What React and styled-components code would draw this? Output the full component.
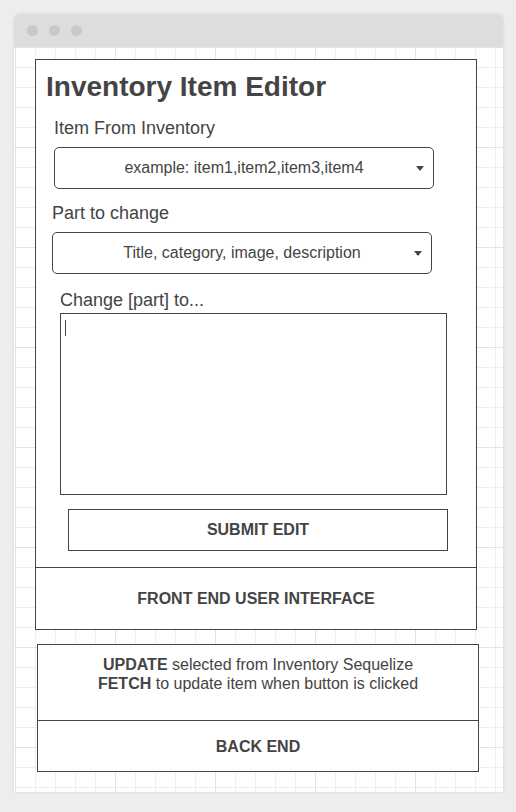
import React from "react";
import styled, { createGlobalStyle } from "styled-components";

const GlobalStyle = createGlobalStyle`
  html, body {
    margin: 0;
    padding: 0;
    background: #ededed;
  }
  body {
    font-family: "Liberation Sans", Arial, sans-serif;
    color: #444;
  }
  * { box-sizing: border-box; }
`;

const Page = styled.div`
  padding: 14px 13px 20px 14px;
`;

const Window = styled.div`
  width: 489px;
  display: flex;
  flex-direction: column;
  border-radius: 6px 6px 0 0;
  box-shadow: 0 0 3px rgba(0, 0, 0, 0.12);
`;

const TitleBar = styled.div`
  height: 33px;
  background: #dddddd;
  border-radius: 6px 6px 0 0;
  display: flex;
  align-items: center;
  gap: 11px;
  padding-left: 13px;
`;

const Dot = styled.span`
  width: 11px;
  height: 11px;
  border-radius: 50%;
  background: #c9c9c9;
`;

const Canvas = styled.div`
  background-color: #fff;
  background-image:
    linear-gradient(to right, #e3e3e3 1px, transparent 1px),
    linear-gradient(to bottom, #e3e3e3 1px, transparent 1px),
    linear-gradient(to right, #eeeeee 1px, transparent 1px),
    linear-gradient(to bottom, #eeeeee 1px, transparent 1px);
  background-size: 100px 100px, 100px 100px, 20px 20px, 20px 20px;
  background-position: 1px 0, 1px 0, 1px 0, 1px 0;
  padding: 12px 0 20px 0;
  display: flex;
  flex-direction: column;
`;

const Frame = styled.div`
  width: 442px;
  margin-left: ${(p) => p.$left}px;
  margin-top: ${(p) => p.$top || 0}px;
  border: 1px solid #444;
  background: #fff;
  display: flex;
  flex-direction: column;
`;

const EditorSection = styled.div`
  padding: 11px 0 16px 0;
  display: flex;
  flex-direction: column;
  align-items: flex-start;
`;

const Title = styled.h1`
  margin: 0 0 0 10px;
  font-size: 28px;
  line-height: 32px;
  font-weight: 700;
  color: #444;
`;

const Label = styled.div`
  margin-top: ${(p) => p.$top}px;
  margin-left: ${(p) => p.$left}px;
  font-size: 18px;
  line-height: 22px;
  color: #444;
`;

const Select = styled.div`
  margin-top: ${(p) => p.$top}px;
  margin-left: ${(p) => p.$left}px;
  width: 380px;
  height: 42px;
  border: 1px solid #444;
  border-radius: 5px;
  display: grid;
  grid-template-columns: 24px 1fr 24px;
  align-items: center;
  font-size: 16px;
  color: #444;
`;

const SelectText = styled.span`
  grid-column: 2;
  text-align: center;
  white-space: nowrap;
`;

const Arrow = styled.span`
  grid-column: 3;
  justify-self: end;
  margin-right: ${(p) => p.$right}px;
  width: 0;
  height: 0;
  border-left: 4px solid transparent;
  border-right: 4px solid transparent;
  border-top: 5px solid #444;
`;

const TextBox = styled.div`
  margin-top: 2px;
  margin-left: 24px;
  width: 387px;
  height: 182px;
  border: 1px solid #444;
  padding: 6px 0 0 4px;
`;

const Caret = styled.div`
  width: 1px;
  height: 16px;
  background: #444;
`;

const SubmitButton = styled.div`
  margin-top: 14px;
  margin-left: 32px;
  width: 380px;
  height: 42px;
  border: 1px solid #444;
  display: flex;
  align-items: center;
  justify-content: center;
  font-size: 16px;
  font-weight: 700;
  color: #444;
`;

const Band = styled.div`
  height: ${(p) => p.$h}px;
  border-top: ${(p) => (p.$divider ? "1px solid #444" : "none")};
  display: flex;
  flex-direction: column;
  align-items: center;
  justify-content: ${(p) => (p.$center ? "center" : "flex-start")};
  padding-top: ${(p) => p.$pad || 0}px;
  font-size: 16px;
  line-height: 19px;
  color: #444;
  text-align: center;
`;

const Strong = styled.b`
  font-weight: 700;
`;

export default function App() {
  return (
    <>
      <GlobalStyle />
      <Page>
        <Window>
          <TitleBar>
            <Dot />
            <Dot />
            <Dot />
          </TitleBar>
          <Canvas>
            <Frame $left={21}>
              <EditorSection>
                <Title>Inventory Item Editor</Title>
                <Label $top={14} $left={18}>Item From Inventory</Label>
                <Select $top={8} $left={18}>
                  <SelectText>example: item1,item2,item3,item4</SelectText>
                  <Arrow $right={9} />
                </Select>
                <Label $top={13} $left={16}>Part to change</Label>
                <Select $top={8} $left={16}>
                  <SelectText>Title, category, image, description</SelectText>
                  <Arrow $right={9} />
                </Select>
                <Label $top={15} $left={24}>Change [part] to...</Label>
                <TextBox>
                  <Caret />
                </TextBox>
                <SubmitButton>SUBMIT EDIT</SubmitButton>
              </EditorSection>
              <Band $h={62} $divider $center>
                <Strong>FRONT END USER INTERFACE</Strong>
              </Band>
            </Frame>
            <Frame $left={23} $top={14}>
              <Band $h={75} $pad={10}>
                <div>
                  <Strong>UPDATE</Strong> selected from Inventory Sequelize
                </div>
                <div>
                  <Strong>FETCH</Strong> to update item when button is clicked
                </div>
              </Band>
              <Band $h={51} $divider $center>
                <Strong>BACK END</Strong>
              </Band>
            </Frame>
          </Canvas>
        </Window>
      </Page>
    </>
  );
}
